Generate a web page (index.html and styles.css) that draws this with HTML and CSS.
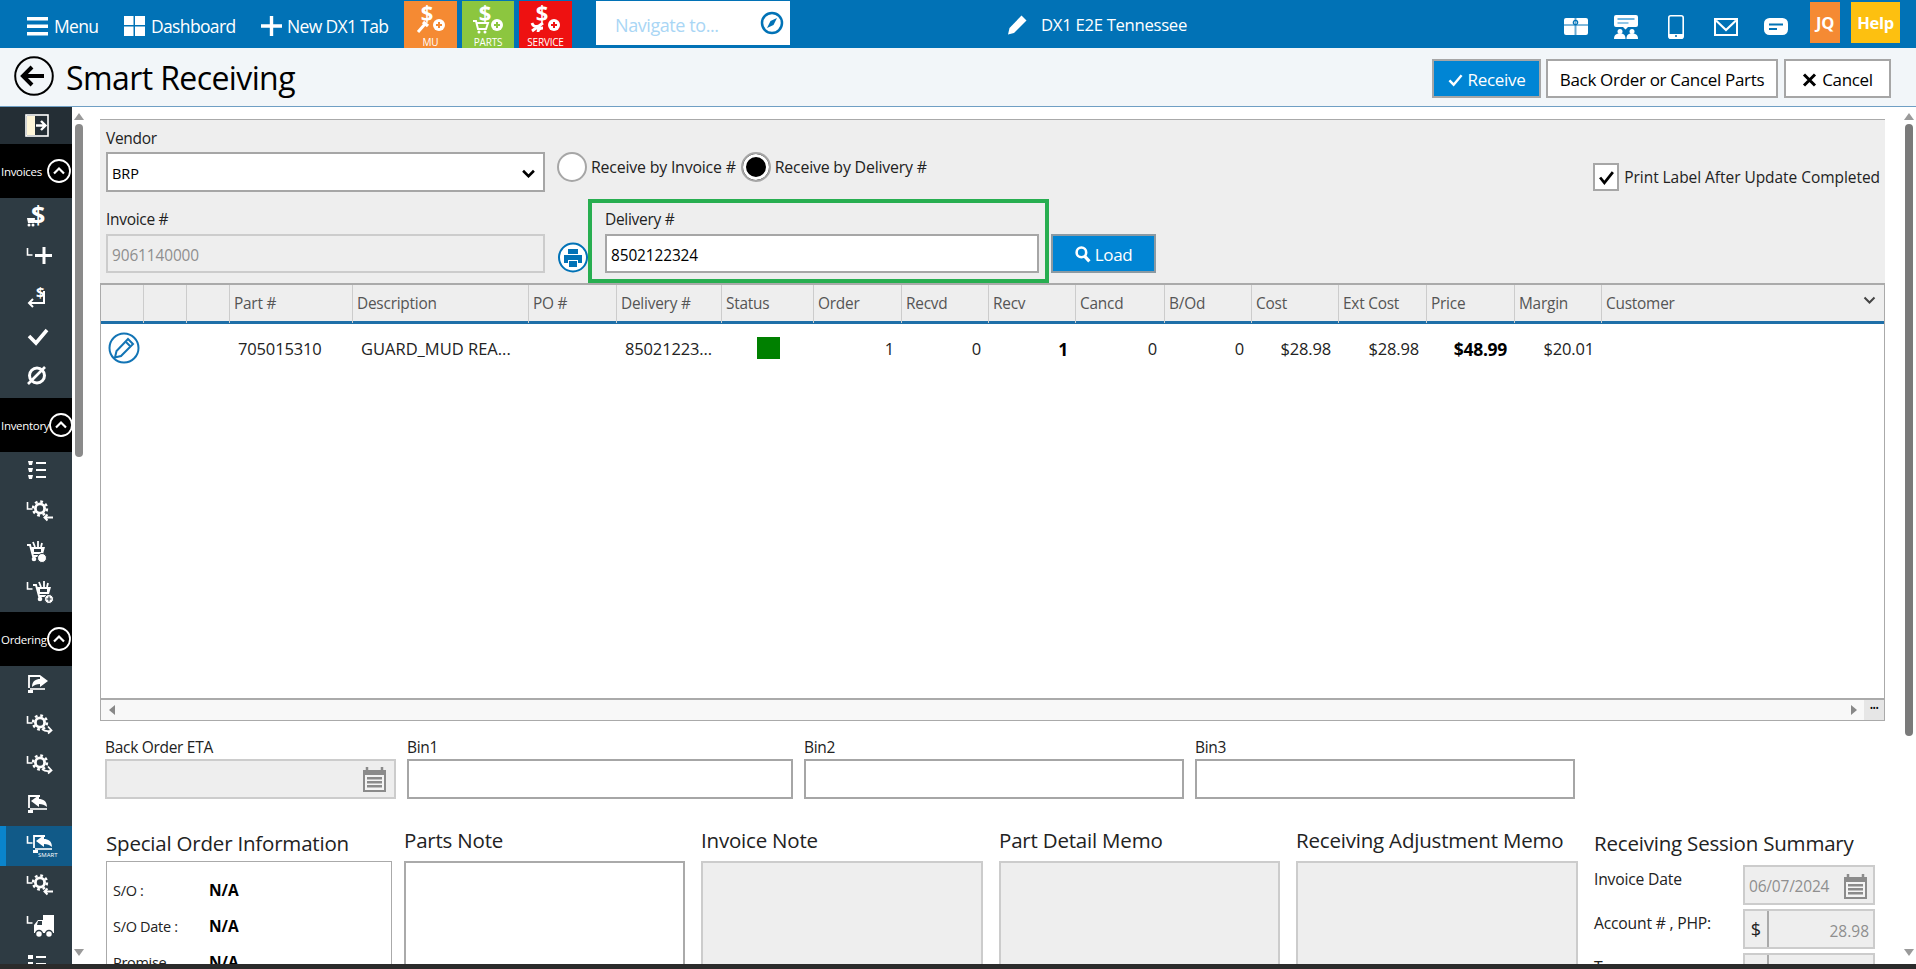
FILE: index.html
```html
<!DOCTYPE html>
<html lang="en">
<head>
<meta charset="utf-8">
<title>Smart Receiving</title>
<link rel="stylesheet" href="styles.css">
</head>
<body>
<svg class="sprite" width="0" height="0" aria-hidden="true">
  <defs>
    <path id="i-l" d="M27.500 10v7h5" fill="none" stroke="#fff" stroke-width="1.600"/>
    <g id="i-gear" fill="none" stroke="#fff">
      <circle cx="40" cy="16.500" r="4.600" stroke-width="2.800"/>
      <circle cx="40" cy="16.500" r="7" stroke-width="2.400" stroke-dasharray="2.750 2.750"/>
    </g>
    <path id="i-back" d="M53 25.500H44.500M47.500 22.500l-3 3 3 3" fill="none" stroke="#fff" stroke-width="2"/>
    <path id="i-fwd" d="M42 23c3 2.500 6 2.500 9 1.500M48 20.500l3.500 4-3.500 3" fill="none" stroke="#fff" stroke-width="1.800"/>
    <g id="i-cart">
      <path d="M27 13h3l3 11h10" fill="none" stroke="#fff" stroke-width="2"/>
      <path d="M31 15h14l-2 7H33z" fill="#fff"/>
      <path d="M34 17h7v3h-7z" fill="#2e3b43"/>
      <path d="M33 10l2 5M38 9v6M42 11l-1 4" stroke="#fff" stroke-width="1.800"/>
      <circle cx="34" cy="27" r="2.300" fill="#fff"/><circle cx="42" cy="27" r="2.300" fill="#fff"/>
    </g>
    <g id="i-send" transform="translate(0 -2)">
      <path d="M29 24V12h11" fill="none" stroke="#fff" stroke-width="1.800"/>
      <path d="M30 25h15" stroke="#fff" stroke-width="1.600"/>
      <path fill="#fff" d="M32 23c0-6 4-8 8-8v-4l8 6-8 6v-3c-3 0-6 1-8 3z"/>
      <path fill="#fff" d="M28 26h5v3h-5z"/>
    </g>
    <g id="i-recv" transform="translate(0 -2)">
      <path d="M29 24V12h11" fill="none" stroke="#fff" stroke-width="1.800"/>
      <path d="M30 25h17" stroke="#fff" stroke-width="1.600"/>
      <path fill="#fff" d="M47 23c0-6-4-8-8-8v-4l-8 6 8 6v-3c3 0 6 1 8 3z"/>
      <path fill="#fff" d="M28 26h5v3h-5z"/>
    </g>
    <g id="i-calendar">
      <path d="M1 4h23v22H1z" fill="#8b8b8b"/>
      <path d="M5 1v5M20 1v5" stroke="#8b8b8b" stroke-width="2.500"/>
      <path d="M3 9h19v15H3z" fill="#f4f4f4"/>
      <path d="M5 11h15v2.500H5zM5 15h15v2.500H5zM5 19h15v2.500H5z" fill="#8b8b8b"/>
    </g>
  </defs>
</svg>

<div class="app">
  <header class="topbar">
    <a class="nav-link nav-menu">
      <svg class="nav-ico" viewBox="0 0 21 20"><path d="M0 1h21v3.500H0zM0 8.500h21V12H0zM0 16h21v3.500H0z" fill="#fff"/></svg>
      <span>Menu</span>
    </a>
    <a class="nav-link nav-dash">
      <svg class="nav-ico" viewBox="0 0 21 20"><path d="M0 0h9.500v9H0zM11 0h10v9H11zM0 10.500h9.500V20H0zM11 10.500h10V20H11z" fill="#fff"/></svg>
      <span>Dashboard</span>
    </a>
    <a class="nav-link nav-new">
      <svg class="nav-ico" viewBox="0 0 21 20"><path d="M8.800 0h3.400v8.300H21v3.400h-8.800V20H8.800v-8.300H0V8.300h8.800z" fill="#fff"/></svg>
      <span>New DX1 Tab</span>
    </a>
    <div class="tile tile-mu">
      <svg class="tile-ico" viewBox="0 0 36 32"><text class="tile-dollar" x="15" y="20">$</text><path d="M6 31l7-8" stroke="#fff" stroke-width="3"/><path d="M11 21l5 4" stroke="#fff" stroke-width="3.500"/><circle cx="27" cy="24" r="6" fill="#fff"/><path d="M24 24h6M27 21v6" stroke="#f58a33" stroke-width="2"/></svg>
      <span class="tile-label">MU</span>
    </div>
    <div class="tile tile-parts">
      <svg class="tile-ico" viewBox="0 0 36 32"><text class="tile-dollar" x="15" y="20">$</text><path d="M3 20h3l2 8h8l2-6H7" fill="none" stroke="#fff" stroke-width="2"/><circle cx="9" cy="31" r="1.500" fill="#fff"/><circle cx="15" cy="31" r="1.500" fill="#fff"/><circle cx="27" cy="24" r="6" fill="#fff"/><path d="M24 24h6M27 21v6" stroke="#8cc63f" stroke-width="2"/></svg>
      <span class="tile-label">PARTS</span>
    </div>
    <div class="tile tile-service">
      <svg class="tile-ico" viewBox="0 0 36 32"><text class="tile-dollar" x="15" y="20">$</text><path d="M5 30l11-8M5 22c1 3 3 4 6 3M11 31c0-3 2-4 5-4" fill="none" stroke="#fff" stroke-width="2.800"/><circle cx="27" cy="24" r="6" fill="#fff"/><path d="M24 24h6M27 21v6" stroke="#ee1111" stroke-width="2"/></svg>
      <span class="tile-label">SERVICE</span>
    </div>
    <div class="navigate">
      <span class="navigate-text">Navigate to...</span>
      <svg class="navigate-ico" viewBox="0 0 24 24"><circle cx="12" cy="12" r="10" fill="none" stroke="#0172b6" stroke-width="2.500"/><path d="M17 7l-3.500 7L7 17l3.500-7z" fill="#0172b6"/></svg>
    </div>
    <div class="store">
      <svg class="store-ico" viewBox="0 0 21 21"><path d="M14.500 1.500l5 5L7 19l-6 1.500L2.500 14z" fill="#fff"/></svg>
      <span>DX1 E2E Tennessee</span>
    </div>
    <div class="tools">
      <span class="tool"><svg viewBox="0 0 24 17" width="24" height="17"><rect width="24" height="17" rx="2" fill="#fff"/><path d="M0 7h24" stroke="#0172b6" stroke-width="1"/><path d="M10.500 0h2v17h-2z" fill="#0172b6" opacity=".6"/><circle cx="11.500" cy="4.500" r="2.200" fill="none" stroke="#0172b6" stroke-width="1.200"/></svg></span>
      <span class="tool"><svg viewBox="0 0 24 24" width="24" height="24"><path d="M2 0h20a2 2 0 0 1 2 2v8a2 2 0 0 1-2 2h-8l-2.500 2.500L9 12H2a2 2 0 0 1-2-2V2a2 2 0 0 1 2-2z" fill="#fff"/><path d="M3.500 4h17" stroke="#6db5e0" stroke-width="2"/><path d="M3.500 8h11" stroke="#6db5e0" stroke-width="1.500"/><circle cx="6" cy="16.500" r="2.500" fill="#fff"/><circle cx="18" cy="16.500" r="2.500" fill="#fff"/><path d="M0 24c0-4 2-5.500 6-5.500s5.500 1.500 5.500 5.500zM12.500 24c0-4 1.500-5.500 5.500-5.500s6 1.500 6 5.500z" fill="#fff"/></svg></span>
      <span class="tool"><svg viewBox="0 0 16 24" width="16" height="24"><rect x=".8" y=".8" width="14.400" height="22.400" rx="2" fill="none" stroke="#fff" stroke-width="1.600"/><path d="M1 19h14v4H1z" fill="#fff"/><circle cx="8" cy="21" r="1" fill="#0172b6"/></svg></span>
      <span class="tool"><svg viewBox="0 0 24 18" width="24" height="18"><rect x="1" y="1" width="22" height="16" fill="none" stroke="#fff" stroke-width="2"/><path d="M2 2.500l10 9.500 10-9.500" fill="none" stroke="#fff" stroke-width="2.200"/></svg></span>
      <span class="tool"><svg viewBox="0 0 24 17" width="24" height="17"><rect width="24" height="17" rx="5.500" fill="#fff"/><path d="M5 6.500h14M5 11h8" stroke="#0172b6" stroke-width="2"/></svg></span>
    </div>
    <div class="user-tile">JQ</div>
    <div class="help-tile">Help</div>
  </header>

  <div class="pagehead">
    <svg class="back" viewBox="0 0 40 40"><circle cx="20" cy="20" r="18.800" fill="none" stroke="#000" stroke-width="2"/><path d="M9 20h21M18 11l-9 9 9 9" fill="none" stroke="#000" stroke-width="4"/></svg>
    <h1 class="pagetitle">Smart Receiving</h1>
    <div class="actions">
      <button class="btn btn-primary">
        <svg class="btn-ico" viewBox="0 0 16 14"><path d="M1.500 7.500l4.500 4.500 8.500-10" fill="none" stroke="#fff" stroke-width="2.600"/></svg>Receive
      </button>
      <button class="btn btn-backorder">Back Order or Cancel Parts</button>
      <button class="btn btn-cancel">
        <svg class="btn-ico" viewBox="0 0 14 14"><path d="M1.500 1.500l11 11M12.500 1.500l-11 11" stroke="#000" stroke-width="3"/></svg>Cancel
      </button>
    </div>
  </div>

  <div class="workspace">
    <nav class="sidebar">
      <div class="side-item side-top"><svg viewBox="0 0 72 37" class="side-ico"><rect x="26" y="8" width="22" height="21" fill="none" stroke="#fff" stroke-width="1.600"/><rect x="27" y="9" width="8" height="19" fill="#fff6d8"/><path d="M36 18.500h9M41 14l4.500 4.500L41 23" fill="none" stroke="#fff" stroke-width="2.400"/></svg></div>

      <div class="side-head"><span class="side-head-text">Invoices</span><svg class="side-toggle" viewBox="0 0 24 24"><circle cx="12" cy="12" r="11" fill="#000" stroke="#fff" stroke-width="1.800"/><path d="M7 14.500l5-5 5 5" fill="none" stroke="#fff" stroke-width="2.200"/></svg></div>
      <div class="side-item"><svg viewBox="0 0 72 40" class="side-ico"><text class="side-dollar" x="31" y="26">$</text><path d="M27 20h8l-1 5h-6z" fill="#fff"/><circle cx="29" cy="27" r="1.500" fill="#fff"/><circle cx="33" cy="27" r="1.500" fill="#fff"/></svg></div>
      <div class="side-item"><svg viewBox="0 0 72 40" class="side-ico"><use href="#i-l"/><path d="M44 9v17M35 17.500h17" stroke="#fff" stroke-width="3"/></svg></div>
      <div class="side-item"><svg viewBox="0 0 72 40" class="side-ico"><text class="side-dollar-sm" x="36" y="20">$</text><path d="M44 13v12H30M33 21l-4 4 4 4" fill="none" stroke="#fff" stroke-width="2"/></svg></div>
      <div class="side-item"><svg viewBox="0 0 72 40" class="side-ico"><path d="M29 18l7 7 11-13" fill="none" stroke="#fff" stroke-width="3.600"/></svg></div>
      <div class="side-item"><svg viewBox="0 0 72 40" class="side-ico"><circle cx="37" cy="17.500" r="7.500" fill="none" stroke="#fff" stroke-width="3"/><path d="M28 26l17-17" stroke="#fff" stroke-width="2.600"/></svg></div>

      <div class="side-head"><span class="side-head-text">Inventory</span><svg class="side-toggle" viewBox="0 0 24 24"><circle cx="12" cy="12" r="11" fill="#000" stroke="#fff" stroke-width="1.800"/><path d="M7 14.500l5-5 5 5" fill="none" stroke="#fff" stroke-width="2.200"/></svg></div>
      <div class="side-item"><svg viewBox="0 0 72 40" class="side-ico"><path d="M36 11h10M36 18h10M36 25h10" stroke="#fff" stroke-width="1.800"/><path d="M28 9h5l-1 4h-3zM28 16h5l-1 4h-3zM28 23h5l-1 4h-3z" fill="#fff"/></svg></div>
      <div class="side-item"><svg viewBox="0 0 72 40" class="side-ico"><use href="#i-l"/><use href="#i-gear"/><use href="#i-back"/></svg></div>
      <div class="side-item"><svg viewBox="0 0 72 40" class="side-ico"><use href="#i-cart"/><circle cx="42" cy="26" r="4.500" fill="#fff" stroke="#2e3b43"/></svg></div>
      <div class="side-item"><svg viewBox="0 0 72 40" class="side-ico"><use href="#i-l"/><use href="#i-cart" x="6"/><circle cx="49" cy="27" r="4.500" fill="#fff" stroke="#2e3b43"/><path d="M49 24.500v5M46.500 27h5" stroke="#2e3b43" stroke-width="1.200"/></svg></div>

      <div class="side-head"><span class="side-head-text">Ordering</span><svg class="side-toggle" viewBox="0 0 24 24"><circle cx="12" cy="12" r="11" fill="#000" stroke="#fff" stroke-width="1.800"/><path d="M7 14.500l5-5 5 5" fill="none" stroke="#fff" stroke-width="2.200"/></svg></div>
      <div class="side-item"><svg viewBox="0 0 72 40" class="side-ico"><use href="#i-send"/></svg></div>
      <div class="side-item"><svg viewBox="0 0 72 40" class="side-ico"><use href="#i-l"/><use href="#i-gear"/><use href="#i-fwd"/></svg></div>
      <div class="side-item"><svg viewBox="0 0 72 40" class="side-ico"><use href="#i-l"/><use href="#i-gear"/><use href="#i-fwd"/></svg></div>
      <div class="side-item"><svg viewBox="0 0 72 40" class="side-ico"><use href="#i-recv"/></svg></div>
      <div class="side-item side-active"><svg viewBox="0 0 72 40" class="side-ico"><use href="#i-l"/><use href="#i-recv" x="5"/><text class="side-smart" x="38" y="31">SMART</text></svg></div>
      <div class="side-item"><svg viewBox="0 0 72 40" class="side-ico"><use href="#i-l"/><use href="#i-gear"/><use href="#i-back"/></svg></div>
      <div class="side-item"><svg viewBox="0 0 72 40" class="side-ico"><use href="#i-l"/><path d="M43 9h11v18H34v-8l4-5h5z" fill="#fff"/><path d="M38 15h4v4h-5z" fill="#2e3b43"/><circle cx="39" cy="28" r="3.500" fill="#fff" stroke="#2e3b43" stroke-width="1.500"/><circle cx="49" cy="28" r="3.500" fill="#fff" stroke="#2e3b43" stroke-width="1.500"/></svg></div>
      <div class="side-item"><svg viewBox="0 0 72 40" class="side-ico"><path d="M36 11h10M36 18h10" stroke="#fff" stroke-width="1.800"/><path d="M28 9h5v4h-5zM28 16h5v4h-5z" fill="#fff"/></svg></div>
    </nav>

    <div class="side-scroll">
      <span class="arrow-up"></span>
      <span class="side-thumb"></span>
      <span class="arrow-down"></span>
    </div>

    <main class="content">
      <section class="filters">
        <div class="filter-row">
          <div class="field field-vendor">
            <label class="label">Vendor</label>
            <div class="select"><span>BRP</span><svg class="select-chev" viewBox="0 0 12 8"><path d="M1 1.500l5 5 5-5" fill="none" stroke="#000" stroke-width="2.400"/></svg></div>
          </div>
          <div class="radios">
            <span class="radio"></span><span class="radio-label">Receive by Invoice #</span>
            <span class="radio radio-on"></span><span class="radio-label">Receive by Delivery #</span>
          </div>
          <div class="print-label">
            <span class="checkbox"><svg viewBox="0 0 16 14"><path d="M2 7l4 5 8-10" fill="none" stroke="#000" stroke-width="2.600"/></svg></span>
            <span>Print Label After Update Completed</span>
          </div>
        </div>
        <div class="filter-row filter-row-second">
          <div class="field field-invoice">
            <label class="label">Invoice #</label>
            <div class="input input-disabled">9061140000</div>
          </div>
          <svg class="print-btn" viewBox="0 0 30 31"><circle cx="15" cy="15.500" r="14" fill="#fff" stroke="#0172b6" stroke-width="2"/><path d="M10 7h10v5H10zM6 13h18v8h-4v-3H10v3H6zM11 19h8v6h-8z" fill="#0172b6"/></svg>
          <div class="highlight">
            <label class="label">Delivery #</label>
            <div class="input input-delivery">8502122324</div>
          </div>
          <button class="btn-load">
            <svg class="load-ico" viewBox="0 0 15 16"><circle cx="6" cy="6" r="4.500" fill="none" stroke="#fff" stroke-width="2.400"/><path d="M9 9.500l4.500 5" stroke="#fff" stroke-width="3"/></svg>Load
          </button>
        </div>
      </section>

      <section class="grid">
        <div class="grid-row grid-head">
          <div class="th"></div><div class="th"></div><div class="th"></div>
          <div class="th">Part #</div><div class="th">Description</div><div class="th">PO #</div>
          <div class="th">Delivery #</div><div class="th">Status</div><div class="th">Order</div>
          <div class="th">Recvd</div><div class="th">Recv</div><div class="th">Cancd</div>
          <div class="th">B/Od</div><div class="th">Cost</div><div class="th">Ext Cost</div>
          <div class="th">Price</div><div class="th">Margin</div>
          <div class="th th-last">Customer<svg class="th-chev" viewBox="0 0 12 8"><path d="M1 1.500l5 5 5-5" fill="none" stroke="#444" stroke-width="2"/></svg></div>
        </div>
        <div class="grid-row grid-data">
          <div class="td td-edit"><svg class="edit" viewBox="0 0 32 32"><circle cx="16" cy="16" r="14.500" fill="#fff" stroke="#1274b5" stroke-width="2"/><path d="M20 7l5 5-12 12-6 1.500L8.500 19z" fill="none" stroke="#1274b5" stroke-width="2"/><path d="M18 10l4 4" stroke="#1274b5" stroke-width="2"/></svg></div>
          <div class="td"></div><div class="td"></div>
          <div class="td td-text">705015310</div>
          <div class="td td-text td-desc">GUARD_MUD REA...</div>
          <div class="td"></div>
          <div class="td td-text">85021223...</div>
          <div class="td td-status"><span class="status-dot"></span></div>
          <div class="td td-num">1</div><div class="td td-num">0</div>
          <div class="td td-num td-strong">1</div><div class="td td-num">0</div>
          <div class="td td-num">0</div><div class="td td-num">$28.98</div>
          <div class="td td-num">$28.98</div><div class="td td-num td-strong">$48.99</div>
          <div class="td td-num">$20.01</div><div class="td"></div>
        </div>
        <div class="grid-hscroll">
          <span class="arrow-left"></span>
          <span class="arrow-right"></span>
          <span class="grid-more">&#8226;&#8226;&#8226;</span>
        </div>
      </section>

      <section class="bins">
        <div class="field bin-eta">
          <label class="label">Back Order ETA</label>
          <div class="input input-disabled input-date"><svg class="cal" viewBox="0 0 25 27"><use href="#i-calendar"/></svg></div>
        </div>
        <div class="field bin-1"><label class="label">Bin1</label><div class="input"></div></div>
        <div class="field bin-2"><label class="label">Bin2</label><div class="input"></div></div>
        <div class="field bin-3"><label class="label">Bin3</label><div class="input"></div></div>
      </section>

      <section class="notes">
        <div class="note note-special">
          <h2 class="note-title note-title-low">Special Order Information</h2>
          <div class="so-box">
            <div class="so-row"><span>S/O :</span><b>N/A</b></div>
            <div class="so-row"><span>S/O Date :</span><b>N/A</b></div>
            <div class="so-row"><span>Promise</span><b>N/A</b></div>
          </div>
        </div>
        <div class="note note-parts">
          <h2 class="note-title">Parts Note</h2>
          <div class="note-box"></div>
        </div>
        <div class="note note-invoice">
          <h2 class="note-title">Invoice Note</h2>
          <div class="note-box note-box-off"></div>
        </div>
        <div class="note note-detail">
          <h2 class="note-title">Part Detail Memo</h2>
          <div class="note-box note-box-off"></div>
        </div>
        <div class="note note-adjust">
          <h2 class="note-title">Receiving Adjustment Memo</h2>
          <div class="note-box note-box-off"></div>
        </div>
        <div class="note note-summary">
          <h2 class="note-title note-title-low">Receiving Session Summary</h2>
          <div class="sum-row">
            <span class="sum-label">Invoice Date</span>
            <div class="sum-input">06/07/2024<svg class="cal" viewBox="0 0 25 27"><use href="#i-calendar"/></svg></div>
          </div>
          <div class="sum-row">
            <span class="sum-label">Account # , PHP:</span>
            <div class="sum-group"><span class="sum-addon">$</span><span class="sum-value">28.98</span></div>
          </div>
          <div class="sum-row">
            <span class="sum-label">Tax :</span>
            <div class="sum-group"><span class="sum-addon">$</span><span class="sum-value"></span></div>
          </div>
        </div>
      </section>
    </main>

    <div class="page-scroll">
      <span class="arrow-up"></span>
      <span class="page-thumb"></span>
      <span class="arrow-down"></span>
    </div>
  </div>
  <div class="statusstrip"></div>
</div>
</body>
</html>
```

FILE: styles.css
```css
* { box-sizing: border-box; }
html, body { margin: 0; height: 100%; overflow: hidden; background: #fff; }
body { font-family: "Open Sans", "Noto Sans", "Liberation Sans", sans-serif; font-size: 14px; color: #000; }
.sprite { position: absolute; }
h1, h2 { margin: 0; font-weight: 400; }
button { font-family: inherit; cursor: pointer; }

.app { display: flex; flex-direction: column; width: 1916px; height: 969px; }

/* top bar */
.topbar { display: flex; align-items: flex-start; height: 48px; flex: none; background: #0172b6; color: #fff; }
.nav-link { display: flex; align-items: center; gap: 6px; height: 48px; padding-top: 3px; font-size: 17.500px; letter-spacing: -.65px; color: #fff; white-space: nowrap; }
.nav-ico { width: 21px; height: 20px; flex: none; }
.nav-menu { width: 71px; margin-left: 27px; }
.nav-dash { width: 111px; margin-left: 26px; }
.nav-new { width: 129px; margin-left: 26px; gap: 5px; }
.tile { display: flex; flex-direction: column; align-items: flex-start; width: 53px; height: 47px; margin-top: 1px; color: #fff; }
.tile-mu { margin-left: 14px; background: #f58a33; }
.tile-parts { width: 52px; margin-left: 5px; background: #8cc63f; }
.tile-service { margin-left: 5px; background: #ee1111; }
.tile-ico { display: block; width: 36px; height: 32px; margin-left: 8px; flex: none; overflow: visible; }
.tile-dollar { font-size: 22px; font-weight: 700; fill: #fff; font-family: "Open Sans", sans-serif; text-anchor: middle; }
.tile-label { align-self: center; font-size: 10px; line-height: 12px; letter-spacing: -.2px; margin-top: 3px; }
.navigate { display: flex; align-items: center; justify-content: space-between; width: 194px; height: 44px; margin: 1px 0 0 24px; padding: 3px 6px 0 19px; background: #fff; }
.navigate-text { font-size: 18px; letter-spacing: -.42px; line-height: 24px; color: #a9d6f5; }
.navigate-ico { width: 24px; height: 24px; margin-top: -3px; }
.store { display: flex; align-items: center; gap: 13px; height: 48px; margin-left: 217px; font-size: 16.700px; letter-spacing: -.3px; white-space: nowrap; }
.store-ico { width: 21px; height: 21px; }
.tools { display: flex; margin-left: auto; margin-right: 9px; }
.tool { display: flex; align-items: center; justify-content: center; width: 50px; height: 48px; padding-top: 5px; }
.user-tile, .help-tile { display: flex; align-items: center; justify-content: center; height: 41px; margin-top: 2px; font-size: 16.500px; font-weight: 700; letter-spacing: -.3px; color: #fff; }
.user-tile { width: 30px; background: #f58a33; }
.help-tile { width: 49px; margin: 2px 16px 0 11px; background: #fdc010; }

/* page heading */
.pagehead { display: flex; align-items: flex-start; height: 59px; flex: none; padding-top: 8px; background: #f2f6f9; border-bottom: 1px solid #6f9fc4; }
.back { width: 40px; height: 40px; margin-left: 14px; flex: none; }
.pagetitle { margin-left: 12px; font-size: 32px; line-height: 44px; letter-spacing: -.6px; white-space: nowrap; }
.actions { display: flex; gap: 5px; margin-left: auto; margin-right: 25px; margin-top: 3px; }
.btn { display: flex; align-items: center; justify-content: center; gap: 5px; height: 39px; padding: 2px 0 0; border: 2px solid #a6a6a6; background: #fff; font-size: 17px; letter-spacing: -.32px; color: #000; white-space: nowrap; }
.btn-ico { height: 14px; width: 15px; flex: none; }
.btn-primary { width: 109px; background: #0085d4; color: #fff; }
.btn-backorder { width: 232px; }
.btn-cancel { width: 107px; margin-left: 1px; }

/* workspace */
.workspace { display: flex; flex: 1; min-height: 0; }
.sidebar { width: 72px; flex: none; overflow: hidden; background: #2e3b43; }
.side-item { display: block; height: 40px; }
.side-top { height: 37px; background: #242e35; }
.side-ico { display: block; width: 72px; height: 100%; }
.side-head { display: flex; align-items: center; height: 54px; padding-left: 1px; background: #000; color: #fff; }
.side-head-text { font-size: 11.500px; letter-spacing: -.3px; white-space: nowrap; }
.side-toggle { width: 24px; height: 24px; margin-left: auto; margin-right: 1px; flex: none; }
.side-active { background: linear-gradient(90deg, #0a84cc 6px, #115a88 6px); }
.side-dollar { font-size: 25px; font-weight: 700; fill: #fff; font-family: "Open Sans", sans-serif; }
.side-dollar-sm { font-size: 15px; font-weight: 700; fill: #fff; font-family: "Open Sans", sans-serif; }
.side-smart { font-size: 6px; fill: #fff; font-family: "Open Sans", sans-serif; }

.side-scroll { display: flex; flex-direction: column; align-items: center; width: 14px; flex: none; padding: 6px 0 8px; background: #fff; }
.side-thumb { width: 8px; height: 333px; margin-top: 4px; border-radius: 4px; background: #8a8a8a; }
.page-scroll { display: flex; flex-direction: column; align-items: center; width: 14px; flex: none; padding: 6px 0 8px; background: #fff; }
.page-thumb { width: 8px; height: 612px; margin-top: 4px; border-radius: 4px; background: #7a7a7a; }
.arrow-up { width: 0; height: 0; flex: none; border: 5px solid transparent; border-top: 0; border-bottom: 7px solid #9a9a9a; }
.arrow-down { width: 0; height: 0; flex: none; margin-top: auto; border: 5px solid transparent; border-bottom: 0; border-top: 7px solid #9a9a9a; }
.arrow-left { width: 0; height: 0; border: 5px solid transparent; border-left: 0; border-right: 6px solid #888; }
.arrow-right { width: 0; height: 0; margin-left: auto; margin-right: 7px; border: 5px solid transparent; border-right: 0; border-left: 6px solid #888; }

.content { flex: 1; min-width: 0; overflow: hidden; padding-top: 12px; background: #fff; }

/* filter panel */
.filters { width: 1785px; margin-left: 14px; padding: 8px 0 0 6px; background: #eee; border-top: 1px solid #aaa; }
.filter-row { display: flex; align-items: flex-start; }
.filter-row-second { height: 84px; margin-top: 7px; }
.label { display: block; font-size: 15.500px; line-height: 20px; letter-spacing: -.3px; color: #222; }
.field-vendor, .field-invoice { width: 439px; flex: none; }
.select { display: flex; align-items: center; justify-content: space-between; height: 40px; margin-top: 4px; padding: 2px 8px 0 4px; border: 2px solid #a6a6a6; background: #fff; font-size: 14.500px; }
.select-chev { width: 13px; height: 9px; }
.radios { display: flex; align-items: center; height: 30px; margin: 24px 0 0 12px; }
.radio { display: block; width: 30px; height: 30px; flex: none; border: 2px solid #a6a6a6; border-radius: 50%; background: #fff; }
.radio-on { background: #000; box-shadow: inset 0 0 0 3px #fff; }
.radio-label { margin-left: 4px; margin-right: 5px; font-size: 15.900px; letter-spacing: -.2px; white-space: nowrap; color: #222; }
.print-label { display: flex; align-items: center; gap: 5px; margin-left: auto; margin-top: 35px; margin-right: 5px; font-size: 15.500px; letter-spacing: -.05px; white-space: nowrap; color: #222; }
.checkbox { display: flex; align-items: center; justify-content: center; width: 26px; height: 28px; flex: none; border: 2px solid #a6a6a6; background: #fff; }
.checkbox svg { width: 17px; height: 15px; }
.field-invoice { padding-top: 10px; }
.input { height: 39px; margin-top: 5px; padding: 2px 4px 0; line-height: 35px; border: 2px solid #a6a6a6; background: #fff; font-size: 15.400px; letter-spacing: -.1px; }
.input-disabled { border-color: #ccc; background: #eee; color: #8f8f8f; }
.print-btn { width: 30px; height: 31px; margin: 43px 0 0 13px; flex: none; }
.highlight { width: 461px; height: 84px; flex: none; padding: 6px 6px 0 13px; border: 4px solid #27ae50; }
.input-delivery { width: 434px; }
.btn-load { display: flex; align-items: center; justify-content: center; gap: 4px; width: 105px; height: 39px; margin: 35px 0 0 2px; padding: 2px 0 0; border: 2px solid #8b9aa3; background: #0085d4; color: #fff; font-size: 17px; letter-spacing: -.3px; }
.load-ico { width: 16px; height: 17px; flex: none; }

/* grid */
.grid { width: 1785px; margin-left: 14px; border: 1px solid #aaa; border-top: 0; }
.grid-row { display: grid; grid-template-columns: 43px 43px 43px 123px 176px 88px 105px 92px 88px 87px 87px 89px 87px 87px 88px 88px 87px 1fr; }
.grid-head { height: 41px; background: #eee; border-top: 2px solid #aaa; border-bottom: 3px solid #1e6fa8; }
.th { position: relative; padding-left: 4px; line-height: 38px; font-size: 15.400px; letter-spacing: -.22px; color: #555; border-right: 1px solid #ccc; white-space: nowrap; }
.th-last { border-right: 0; }
.th-chev { position: absolute; right: 8px; top: 11px; width: 13px; height: 8px; }
.grid-data { height: 374px; align-items: start; }
.td { height: 50px; line-height: 50px; font-size: 16.500px; letter-spacing: -.15px; white-space: nowrap; color: #222; }
.td-edit { padding: 8px 0 0 7px; }
.edit { display: block; width: 32px; height: 32px; }
.td-text { padding-left: 8px; }
.td-desc { letter-spacing: 0; }
.td-num { padding-right: 8px; text-align: right; }
.td-strong { font-size: 17.500px; font-weight: 700; letter-spacing: -.3px; color: #000; }
.td-status { padding: 13px 0 0 35px; }
.status-dot { display: block; width: 23px; height: 22px; background: #008000; }
.grid-hscroll { display: flex; align-items: center; height: 22px; padding-left: 8px; background: #f8f8f8; border-top: 2px solid #aaa; }
.grid-more { width: 20px; height: 20px; line-height: 16px; text-align: center; font-size: 9px; letter-spacing: -.5px; background: #e6e6e6; color: #000; }

/* bins */
.bins { display: flex; gap: 11px; margin: 16px 0 0 19px; }
.bins .input { margin-top: 2px; height: 40px; }
.bin-eta { width: 291px; }
.bin-1 { width: 386px; }
.bin-2, .bin-3 { width: 380px; }
.input-date { display: flex; align-items: center; justify-content: flex-end; padding: 0 7px 0 0; }
.cal { display: block; width: 25px; height: 27px; flex: none; }

/* notes */
.notes { display: flex; gap: 16px; margin: 27px 0 0 20px; }
.note { flex: none; }
.note-special { width: 286px; margin-right: -4px; }
.note-parts, .note-detail { width: 281px; }
.note-invoice { width: 282px; }
.note-adjust { width: 282px; }
.note-summary { width: 281px; }
.note-title { height: 35px; font-size: 20.500px; line-height: 28px; letter-spacing: -.2px; white-space: nowrap; color: #222; }
.note-title-low { padding-top: 3px; }
.note-box { height: 200px; border: 2px solid #aaa; background: #fff; }
.note-box-off { border-color: #ccc; background: #eee; }
.so-box { height: 200px; padding: 10px 0 0 6px; border: 1px solid #aaa; }
.so-row { display: flex; height: 36px; align-items: center; font-size: 14.500px; letter-spacing: -.3px; color: #222; }
.so-row span { width: 96px; flex: none; }
.so-row b { font-size: 15.500px; letter-spacing: 0; color: #000; }
.sum-row { display: flex; height: 40px; margin-top: 4px; justify-content: space-between; }
.sum-label { line-height: 28px; font-size: 15.700px; letter-spacing: -.2px; white-space: nowrap; color: #222; }
.sum-input { display: flex; align-items: center; justify-content: space-between; width: 132px; flex: none; padding: 2px 5px 0 4px; border: 2px solid #ccc; background: #eee; font-size: 15.500px; letter-spacing: -.2px; color: #8f8f8f; }
.sum-group { display: flex; width: 132px; flex: none; border: 2px solid #ccc; background: #eee; font-size: 15.500px; color: #8f8f8f; }
.sum-addon { width: 24px; flex: none; text-align: center; line-height: 36px; font-size: 18px; color: #222; border-right: 2px solid #aaa; }
.sum-value { flex: 1; padding: 3px 4px 0 0; line-height: 34px; text-align: right; }

.statusstrip { height: 5px; flex: none; background: #2b2b2b; }
```
